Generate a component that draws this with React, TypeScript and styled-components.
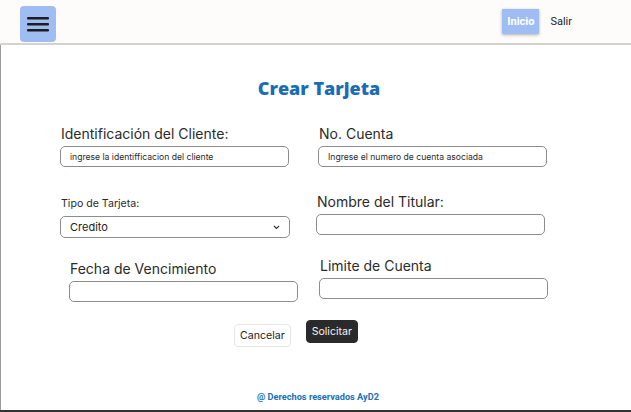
import * as React from "react"
import styled, { createGlobalStyle } from "styled-components"

const GlobalStyle = createGlobalStyle`
  html, body {
    margin: 0;
    padding: 0;
    background: #ffffff;
    font-family: "Inter", "Liberation Sans", sans-serif;
  }
  * { box-sizing: border-box; }
`

const Page = styled.div`
  width: 631px;
  height: 412px;
  display: flex;
  flex-direction: column;
  border-bottom: 2px solid #333;
  overflow: hidden;
`

const Topbar = styled.header`
  height: 45px;
  flex-shrink: 0;
  background: #fdfcfb;
  border-bottom: 2px solid #d2d2d2;
  display: flex;
  align-items: center;
  padding: 0 20px;
`

const MenuButton = styled.button`
  width: 36px;
  height: 36px;
  border: none;
  border-radius: 4px;
  background: #a0bdf3;
  display: flex;
  align-items: center;
  justify-content: center;
  padding: 0;
  margin-top: 4px;
`

const NavLinks = styled.nav`
  margin-left: auto;
  display: flex;
  align-items: center;
  gap: 6px;
  margin-right: 34px;
  margin-top: -1px;
`

const NavLink = styled.a<{ $active?: boolean }>`
  font-family: "Roboto", "Liberation Sans", sans-serif;
  font-size: 11px;
  font-weight: ${p => (p.$active ? 700 : 400)};
  color: ${p => (p.$active ? "#fff" : "#222")};
  background: ${p => (p.$active ? "#a0bdf3" : "transparent")};
  box-shadow: ${p => (p.$active ? "0 1px 3px rgba(0,0,0,0.3)" : "none")};
  padding: 6px 5px;
  text-decoration: none;
`

const Main = styled.main`
  flex: 1;
  border-left: 1px solid #9a9a9a;
  display: flex;
  flex-direction: column;
`

const Title = styled.h1`
  margin: 31px 0 0;
  text-align: center;
  font-family: "Open Sans", sans-serif;
  font-weight: 800;
  font-size: 18px;
  color: #1b6db3;
  line-height: 24px;
  padding-left: 6px;
`

const Row = styled.div<{ $top: number }>`
  display: grid;
  grid-template-columns: 256px 256px;
  padding-left: 59px;
  margin-top: ${p => p.$top}px;
`

const Field = styled.div<{ $shift?: number; $drop?: number }>`
  display: flex;
  flex-direction: column;
  margin-left: ${p => p.$shift ?? 0}px;
  margin-top: ${p => p.$drop ?? 0}px;
`

const Label = styled.label<{ $small?: boolean }>`
  font-size: ${p => (p.$small ? "10.6px" : "14px")};
  color: #2b2b2b;
  line-height: ${p => (p.$small ? "14px" : "17px")};
  margin-bottom: ${p => (p.$small ? "5px" : "4px")};
  padding-left: 1px;
`

const Input = styled.input`
  width: 229px;
  height: 21px;
  border: 1px solid #8c8c8c;
  border-radius: 5px;
  padding: 0 9px;
  font-family: "Inter", "Liberation Sans", sans-serif;
  font-size: 8.6px;
  color: #222;
  background: #fff;
  outline: none;
  &::placeholder { color: #2a2a2a; }
`

const SelectBox = styled.div`
  width: 230px;
  height: 22px;
  border: 1px solid #8c8c8c;
  border-radius: 5px;
  padding: 0 9px;
  display: flex;
  align-items: center;
  justify-content: space-between;
  font-size: 11px;
  color: #222;
`

const Actions = styled.div`
  display: flex;
  justify-content: center;
  align-items: flex-start;
  gap: 15px;
  margin-top: 22px;
  padding-right: 40px;
`

const Button = styled.button<{ $dark?: boolean }>`
  font-family: "Inter", "Liberation Sans", sans-serif;
  font-size: 10.6px;
  height: 23px;
  padding: 0 5px;
  border-radius: 4px;
  border: 1px solid ${p => (p.$dark ? "#2a2a2a" : "#e6e6e6")};
  background: ${p => (p.$dark ? "#2a2a2a" : "#fff")};
  color: ${p => (p.$dark ? "#f2f2f2" : "#222")};
  margin-top: ${p => (p.$dark ? "-4px" : "0")};
`

const Footer = styled.footer`
  margin-top: auto;
  margin-bottom: 8px;
  text-align: center;
  font-family: "Roboto", "Liberation Sans", sans-serif;
  font-weight: 700;
  font-size: 9.2px;
  color: #2270b8;
  padding-left: 4px;
`

const Hamburger = () => (
  <svg width="22" height="18" viewBox="0 0 22 18">
    <rect x="0" y="2" width="22" height="2.4" rx="1" fill="#1d1d1d" />
    <rect x="0" y="8" width="22" height="2.4" rx="1" fill="#1d1d1d" />
    <rect x="0" y="14" width="22" height="2.4" rx="1" fill="#1d1d1d" />
  </svg>
)

const Chevron = () => (
  <svg width="7" height="5" viewBox="0 0 7 5">
    <path d="M1 1 L3.5 3.5 L6 1" stroke="#333" strokeWidth="1.1" fill="none" />
  </svg>
)

export default function App() {
  return (
    <Page>
      <GlobalStyle />
      <Topbar>
        <MenuButton aria-label="menu"><Hamburger /></MenuButton>
        <NavLinks>
          <NavLink $active href="#">Inicio</NavLink>
          <NavLink href="#">Salir</NavLink>
        </NavLinks>
      </Topbar>
      <Main>
        <Title>Crear Tarjeta</Title>
        <Row $top={25}>
          <Field>
            <Label>Identificación del Cliente:</Label>
            <Input placeholder="ingrese la identifficacion del cliente" />
          </Field>
          <Field $shift={2}>
            <Label>No. Cuenta</Label>
            <Input placeholder="Ingrese el numero de cuenta asociada" />
          </Field>
        </Row>
        <Row $top={26}>
          <Field $drop={4}>
            <Label $small>Tipo de Tarjeta:</Label>
            <SelectBox>Credito<Chevron /></SelectBox>
          </Field>
          <Field>
            <Label>Nombre del Titular:</Label>
            <Input />
          </Field>
        </Row>
        <Row $top={19}>
          <Field $shift={9} $drop={3}>
            <Label>Fecha de Vencimiento</Label>
            <Input />
          </Field>
          <Field $shift={3}>
            <Label>Limite de Cuenta</Label>
            <Input />
          </Field>
        </Row>
        <Actions>
          <Button>Cancelar</Button>
          <Button $dark>Solicitar</Button>
        </Actions>
        <Footer>@ Derechos reservados AyD2</Footer>
      </Main>
    </Page>
  )
}
